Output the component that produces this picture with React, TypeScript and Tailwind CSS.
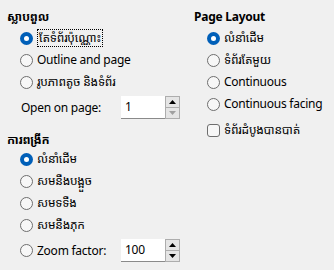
import type { ReactNode } from "react";

const font = { fontFamily: '"Noto Sans", "Noto Sans Khmer", "Khmer OS System", "Khmer OS", sans-serif' };

function Radio({ checked = false }: { checked?: boolean }) {
  if (checked) {
    return (
      <span className="flex h-[13px] w-[13px] shrink-0 items-center justify-center rounded-full bg-[#005fb8]">
        <span className="h-[5px] w-[5px] rounded-full bg-white" />
      </span>
    );
  }
  return <span className="h-[13px] w-[13px] shrink-0 rounded-full border border-[#6e6e6e] bg-[#f7f7f7]" />;
}

function Option({ label, checked, focus }: { label: ReactNode; checked?: boolean; focus?: boolean }) {
  return (
    <div className="ml-[13px] flex h-[22px] items-center gap-[4px] whitespace-nowrap">
      <Radio checked={checked} />
      <span className={focus ? "border border-dotted border-black px-[1px] leading-[16px]" : "leading-[16px]"}>{label}</span>
    </div>
  );
}

function Spin({ value, min }: { value: string; min?: boolean }) {
  return (
    <div className="flex h-[23px]">
      <div className="flex w-[44px] items-center border-b border-[#8a8a8a] bg-white pl-[4px]">{value}</div>
      <div className="flex w-[15px] flex-col bg-white">
        <div className="flex h-1/2 items-center justify-center border border-[#adadad] bg-[#e5e5e5]">
          <svg width="7" height="4" viewBox="0 0 7 4"><path d="M0 4 L3.5 0 L7 4 Z" fill="#000" /></svg>
        </div>
        <div className="flex h-1/2 items-center justify-center border border-t-0 border-[#adadad] bg-[#e5e5e5]">
          <svg width="7" height="4" viewBox="0 0 7 4"><path d="M0 0 L3.5 4 L7 0 Z" fill={min ? "#a0a0a0" : "#000"} /></svg>
        </div>
      </div>
    </div>
  );
}

export default function App() {
  return (
    <div className="flex h-[270px] w-[334px] overflow-hidden bg-[#f0f0f0] text-[12px] tracking-[-0.25px] text-black" style={font}>
      <div className="flex w-[187px] flex-col pl-[7px] pt-[7px]">
        <div className="h-5 font-bold leading-5">ស្លាបពួល</div>
        <div>
          <Option label="តែទំព័រប៉ុណ្ណោះ" checked focus />
          <Option label="Outline and page" />
          <Option label="រូបភាពតូច និងទំព័រ" />
        </div>
        <div className="mt-[3px] flex items-center">
          <span className="ml-[14px] w-[100px]">Open on page:</span>
          <Spin value="1" min />
        </div>
        <div className="mt-[9px] flex h-5 items-end font-bold leading-4">ការពង្រីក</div>
        <div>
          <Option label="លំនាំដើម" checked />
          <Option label="សមនឹងបង្អួច" />
          <Option label="សមទទឹង" />
          <Option label="សមនឹងភុក" />
        </div>
        <div className="mt-[3px] flex items-center">
          <div className="w-[114px]">
            <Option label="Zoom factor:" />
          </div>
          <Spin value="100" />
        </div>
      </div>
      <div className="flex flex-1 flex-col pl-[7px] pt-[7px]">
        <div className="h-5 font-bold leading-5">Page Layout</div>
        <div>
          <Option label="លំនាំដើម" checked />
          <Option label="ទំព័រតែមួយ" />
          <Option label="Continuous" />
          <Option label="Continuous facing" />
        </div>
        <div className="ml-[13px] mt-[4px] flex h-[22px] items-center gap-[4px]">
          <span className="h-[13px] w-[13px] shrink-0 rounded-[3px] border border-[#6e6e6e] bg-[#f7f7f7]" />
          <span>ទំព័រដំបូងបានបាត់</span>
        </div>
      </div>
    </div>
  );
}
